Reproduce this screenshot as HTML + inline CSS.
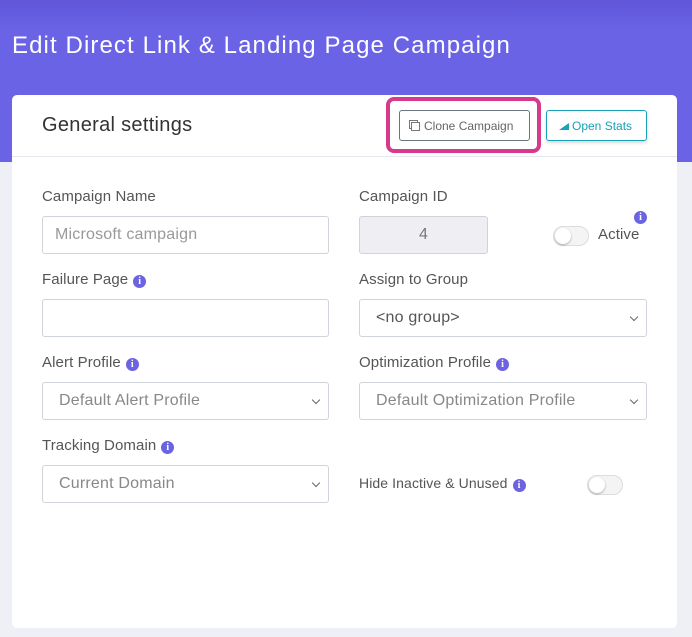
<!DOCTYPE html>
<html><head><style>
*{box-sizing:border-box;margin:0;padding:0}
body{width:692px;height:637px;background:#efeff6;font-family:"Liberation Sans",sans-serif;position:relative;overflow:hidden}
.hdr{position:absolute;left:0;top:0;width:692px;height:162px;background:linear-gradient(#5f57d8,#6b63e6 30px)}
h1{position:absolute;left:12px;top:32px;color:#fff;font-size:24px;font-weight:normal;letter-spacing:1.1px}
.card{position:absolute;left:12px;top:95px;width:665px;height:533px;background:#fff;border-radius:5px}
.t{position:absolute;font-size:20px;color:#333;left:30px;top:19px;letter-spacing:0.3px}
.line{position:absolute;left:0;right:0;top:61px;height:1px;background:#e6e6ec}
.lbl{position:absolute;font-size:15px;color:#555;letter-spacing:0.1px}
.inp{position:absolute;height:38px;border:1px solid #ced4da;border-radius:3px;font-size:16px;color:#888;padding:9px 12px;background:#fff;letter-spacing:0.2px}
.sel{padding-left:16px}
.sel:after{content:"";position:absolute;right:9px;top:14px;width:5px;height:5px;border-right:1.5px solid #666;border-bottom:1.5px solid #666;transform:rotate(45deg)}
.i{display:inline-block;width:13px;height:13px;border-radius:50%;background:#6c63e0;color:#fff;font-size:10px;font-weight:bold;text-align:center;line-height:13px;vertical-align:0px;margin-left:5px;font-family:"Liberation Serif",serif}
.tog{position:absolute;width:36px;height:20px;border:1px solid #ddd;border-radius:10px;background:#f4f4f4}
.tog:before{content:"";position:absolute;left:1px;top:1px;width:16px;height:16px;border-radius:50%;background:#fff;box-shadow:0 1px 2px rgba(0,0,0,.3)}
</style></head><body>
<div class="hdr"></div>
<h1>Edit Direct Link &amp; Landing Page Campaign</h1>
<div class="card">
<div class="t">General settings</div>
<div class="line"></div>
<div style="position:absolute;left:374px;top:2px;width:155px;height:56px;border:4px solid #d63a8c;border-radius:8px"></div>
<div style="position:absolute;left:387px;top:15px;width:131px;height:31px;border:1px solid #6c757d;border-radius:3px;font-size:12px;color:#666;padding:8px 0 0 11px"><span style="display:inline-block;width:9px;height:9px;border:1px solid #777;margin-right:4px;vertical-align:-1px;box-shadow:-2px -2px 0 -1px #fff,-2px -2px 0 0 #777"></span>Clone Campaign</div>
<div style="position:absolute;left:534px;top:15px;width:101px;height:31px;border:1px solid #17a2b8;border-radius:3px;font-size:12px;color:#17a2b8;padding:8px 0 0 12px;box-shadow:0 2px 3px rgba(0,0,0,.15)"><span style="display:inline-block;width:0;height:0;border-left:10px solid transparent;border-bottom:7px solid #17a2b8;margin-right:3px"></span>Open Stats</div>

<div class="lbl" style="left:30px;top:93px">Campaign Name</div>
<div class="inp" style="left:30px;top:121px;width:287px;color:#999">Microsoft campaign</div>
<div class="lbl" style="left:347px;top:93px">Campaign ID</div>
<div class="inp" style="left:347px;top:121px;width:129px;background:#efeff3;text-align:center;color:#777">4</div>
<span class="i" style="position:absolute;left:622px;top:116px;margin:0">i</span>
<div class="tog" style="left:541px;top:131px"></div>
<div class="lbl" style="left:586px;top:131px;font-size:15px">Active</div>

<div class="lbl" style="left:30px;top:176px">Failure Page<span class="i">i</span></div>
<div class="inp" style="left:30px;top:204px;width:287px"></div>
<div class="lbl" style="left:347px;top:176px">Assign to Group</div>
<div class="inp sel" style="left:347px;top:204px;width:288px;color:#555">&lt;no group&gt;</div>

<div class="lbl" style="left:30px;top:259px">Alert Profile<span class="i">i</span></div>
<div class="inp sel" style="left:30px;top:287px;width:287px">Default Alert Profile</div>
<div class="lbl" style="left:347px;top:259px">Optimization Profile<span class="i">i</span></div>
<div class="inp sel" style="left:347px;top:287px;width:288px">Default Optimization Profile</div>

<div class="lbl" style="left:30px;top:342px">Tracking Domain<span class="i">i</span></div>
<div class="inp sel" style="left:30px;top:370px;width:287px">Current Domain</div>
<div class="lbl" style="left:347px;top:380px;font-size:14px">Hide Inactive &amp; Unused<span class="i">i</span></div>
<div class="tog" style="left:575px;top:380px"></div>
</div>
</body></html>
